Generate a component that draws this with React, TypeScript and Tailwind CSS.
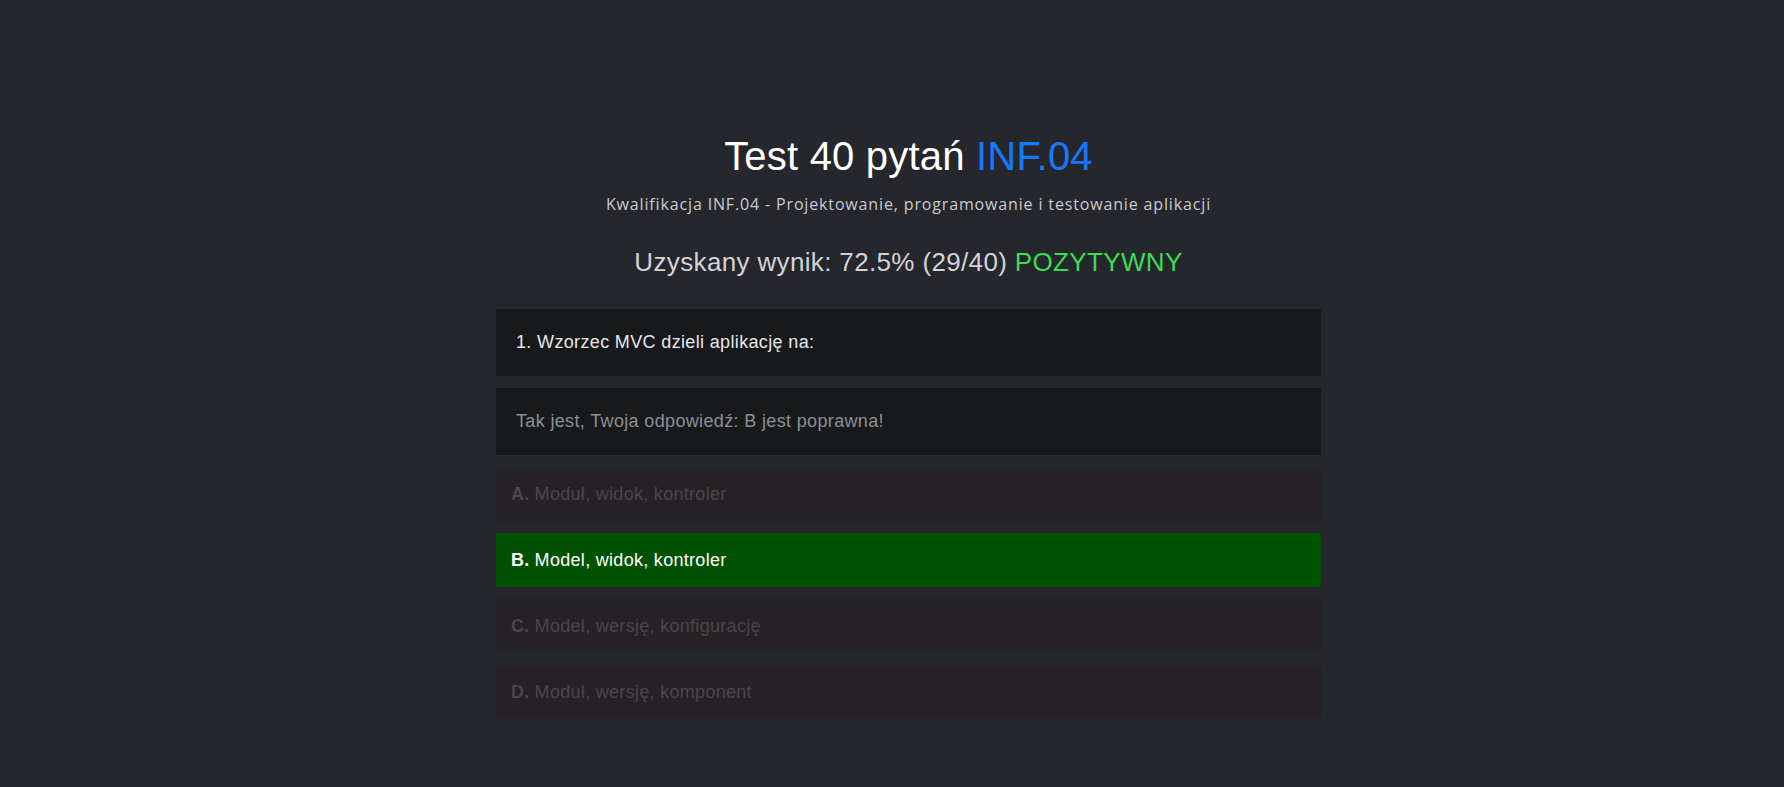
import React from 'react'

type Answer = { letter: string, text: string, correct?: boolean }

const answers: Answer[] = [
  { letter: 'A.', text: 'Moduł, widok, kontroler' },
  { letter: 'B.', text: 'Model, widok, kontroler', correct: true },
  { letter: 'C.', text: 'Model, wersję, konfigurację' },
  { letter: 'D.', text: 'Moduł, wersję, komponent' },
]

export default function App(){
  return (
    <div className="min-h-[787px] bg-[#26272c] pl-[33px] pt-[132px] pb-10 font-['Liberation_Sans',Arial,sans-serif]">
      <div className="mx-auto w-[825px]">
        <h1 className="text-center text-[40px] leading-[48px] tracking-[0.2px] text-white">
          Test 40 pytań <span className="text-[#1479ff]">INF.04</span>
        </h1>
        <p className="mt-[13px] text-center text-[16px] leading-[22px] tracking-[0.85px] text-[#c9cad0] font-['Open_Sans',sans-serif]">
          Kwalifikacja INF.04 - Projektowanie, programowanie i testowanie aplikacji
        </p>
        <div className="mt-[32px] text-center text-[26px] leading-[30px] tracking-[0.35px] text-[#d2d3d8]">
          Uzyskany wynik: 72.5% (29/40) <span className="text-[#3ddc53]">POZYTYWNY</span>
        </div>

        <div className="mt-[32px] flex flex-col gap-3 text-[18px] tracking-[0.3px]">
          <div className="h-[67px] flex items-center px-5 bg-[#18191b] text-[#e6e6ea] tracking-[0.35px]">
            1. Wzorzec MVC dzieli aplikację na:
          </div>
          <div className="h-[67px] flex items-center px-5 bg-[#18191b] text-[#8b9097] tracking-[0.35px]">
            Tak jest, Twoja odpowiedź: B jest poprawna!
          </div>
          {answers.map(a => (
            <div
              key={a.letter}
              className={`h-[54px] flex items-center px-[15px] ${a.correct ? 'bg-[#005200] text-white' : 'bg-[#262126] text-[#4b464a]'}`}
            >
              <b className="mr-[5px]">{a.letter}</b>{a.text}
            </div>
          ))}
        </div>
      </div>
    </div>
  )
}
